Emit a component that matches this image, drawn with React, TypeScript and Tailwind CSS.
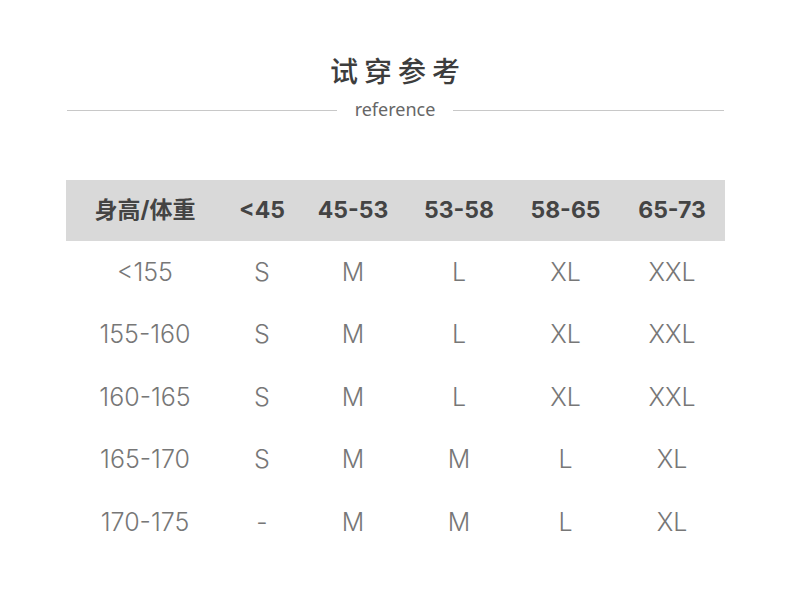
const weights = ["<45", "45-53", "53-58", "58-65", "65-73"];

const rows = [
  { h: "<155", s: ["S", "M", "L", "XL", "XXL"] },
  { h: "155-160", s: ["S", "M", "L", "XL", "XXL"] },
  { h: "160-165", s: ["S", "M", "L", "XL", "XXL"] },
  { h: "165-170", s: ["S", "M", "M", "L", "XL"] },
  { h: "170-175", s: ["-", "M", "M", "L", "XL"] },
];

const cols = "grid grid-cols-[158px_76px_106px_106px_107px_106px]";

export default function App() {
  return (
    <div className="w-[790px] h-[593px] bg-white font-['Inter','Noto_Sans_CJK_SC',sans-serif] overflow-hidden">
      {/* Title */}
      <div className="pt-[51px] flex flex-col items-center">
        <h1 className="text-[28px] leading-[42px] text-[#3d3d3d] tracking-[6px] pl-[6px] font-medium">试穿参考</h1>
        <div className="mt-[4px] w-[657px] flex items-center gap-[18px]">
          <div className="flex-1 h-px bg-[#c8c8c8] mt-[2px]" />
          <span className="text-[18px] leading-[24px] text-[#666] font-['Noto_Sans',sans-serif]">reference</span>
          <div className="flex-1 h-px bg-[#c8c8c8] mt-[2px]" />
        </div>
      </div>

      {/* Table */}
      <div className="mt-[59px] ml-[66px] w-[659px]">
        <div className={`${cols} h-[61px] items-center bg-[#d9d9d9] text-[23px] font-bold text-[#444]`}>
          <div className="text-center">身高/体重</div>
          {weights.map((w) => (
            <div key={w} className="text-center">{w}</div>
          ))}
        </div>
        {rows.map((r) => (
          <div key={r.h} className={`${cols} h-[62.5px] items-center text-[25px] font-light text-[#777]`}>
            <div className="text-center">{r.h}</div>
            {r.s.map((s, i) => (
              <div key={i} className="text-center">{s}</div>
            ))}
          </div>
        ))}
      </div>
    </div>
  );
}
